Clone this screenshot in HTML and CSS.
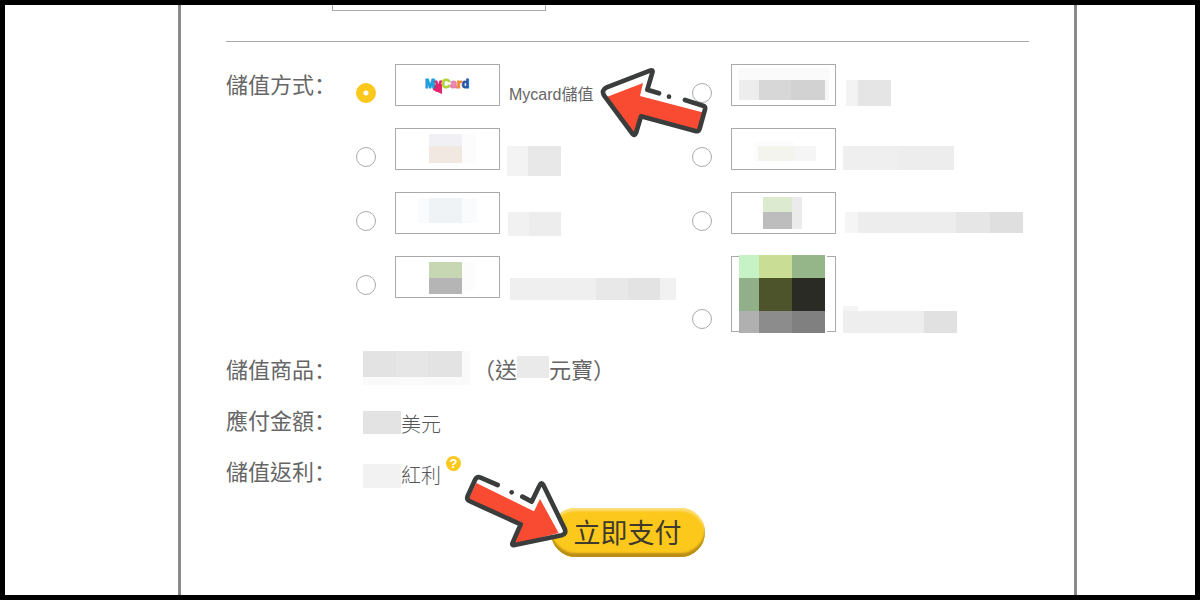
FILE: index.html
```
<!DOCTYPE html>
<html lang="zh-Hant">

<head>
    <meta charset="UTF-8">
    <meta name="viewport" content="width=device-width, initial-scale=1.0">
    <title>儲值</title>
    <link rel="stylesheet" href="styles.css">
</head>

<body>
    <form class="panel">
        <input class="account" type="text" aria-label="帳號">

        <div class="methods" role="radiogroup" aria-labelledby="method-label">
            <span class="row-label" id="method-label">儲值方式<span class="colon" lang="zh-Hans">：</span></span>
            <div class="options">
                <label class="option">
                    <input type="radio" name="method" checked>
                    <span class="brand">
                        <svg width="103" height="40" viewBox="0 0 103 40">
                            <path d="M36 20 L46 19 L46 29 L37 25 Z" fill="#e5266f" />
                            <text class="logo" x="29" y="23"><tspan class="logo-m">M</tspan><tspan class="logo-y">y</tspan><tspan class="logo-c">C</tspan><tspan class="logo-a">a</tspan><tspan class="logo-r">r</tspan><tspan class="logo-d">d</tspan></text>
                        </svg>
                    </span>
                    <span class="option-name">Mycard儲值</span>
                    <svg class="arrow arrow-left" width="110" height="72" viewBox="30 33 330 216">
                        <path d="M172 104 L188 48 L42 100 L38 118 L133 240 L153 184 L322 230 L347 155 Z" fill="#fff" />
                        <path d="M52 125 L159 84 L150 123 L342 173 L322 230 L153 182 L133 240 Z" fill="#f94b31" />
                        <path class="outline" d="M207 115 L172 104 L187 53 Q190 43 180 47 L50 97 Q33 105 42 121 L127 236 Q134 244 138 234 L153 184 L316 228 Q326 231 329 221 L345 163 Q347 155 339 152 L285 135" />
                        <circle cx="237" cy="125" r="7" fill="#3b3d3d" />
                    </svg>
                </label>
                <label class="option">
                    <input type="radio" name="method" aria-label="選項2">
                    <span class="brand">
                        <svg width="103" height="40">
                            <rect x="7" y="3" width="90" height="12" fill="#fafafa" />
                            <rect x="7" y="15" width="20" height="20" fill="#ededed" />
                            <rect x="27" y="15" width="32" height="20" fill="#d7d7d7" />
                            <rect x="59" y="15" width="34" height="20" fill="#d2d2d2" />
                            <rect x="93" y="15" width="4" height="20" fill="#f6f6f6" />
                        </svg>
                    </span>
                    <svg class="mask" width="180" height="28">
                        <rect x="1" y="2" width="12" height="26" fill="#f3f3f3" />
                        <rect x="13" y="2" width="33" height="26" fill="#e5e5e5" />
                    </svg>
                </label>
                <label class="option">
                    <input type="radio" name="method" aria-label="選項3">
                    <span class="brand">
                        <svg width="103" height="40">
                            <rect x="33" y="5" width="33" height="12" fill="#f1f0f5" />
                            <rect x="33" y="17" width="33" height="17" fill="#f2e8e2" />
                            <rect x="66" y="5" width="14" height="29" fill="#fcfcfc" />
                        </svg>
                    </span>
                    <svg class="mask" width="180" height="28">
                        <rect x="-2" y="4" width="21" height="30" fill="#f3f3f3" />
                        <rect x="19" y="4" width="33" height="30" fill="#e8e8e8" />
                    </svg>
                </label>
                <label class="option">
                    <input type="radio" name="method" aria-label="選項4">
                    <span class="brand">
                        <svg width="103" height="40">
                            <rect x="22" y="13" width="40" height="19" fill="#fcfcfc" />
                            <rect x="26" y="17" width="36" height="15" fill="#f3f4ee" />
                            <rect x="62" y="17" width="22" height="15" fill="#f5f5f5" />
                        </svg>
                    </span>
                    <svg class="mask" width="180" height="28">
                        <rect x="-2" y="4" width="56" height="24" fill="#efefef" />
                        <rect x="54" y="4" width="55" height="24" fill="#ededed" />
                    </svg>
                </label>
                <label class="option">
                    <input type="radio" name="method" aria-label="選項5">
                    <span class="brand">
                        <svg width="103" height="40">
                            <rect x="22" y="5" width="59" height="25" fill="#f9fbfc" />
                            <rect x="33" y="5" width="33" height="25" fill="#eff3f6" />
                        </svg>
                    </span>
                    <svg class="mask" width="180" height="28">
                        <rect x="-1" y="6" width="21" height="24" fill="#f1f1f1" />
                        <rect x="20" y="6" width="32" height="24" fill="#ededed" />
                    </svg>
                </label>
                <label class="option">
                    <input type="radio" name="method" aria-label="選項6">
                    <span class="brand">
                        <svg width="103" height="40">
                            <rect x="31" y="4" width="29" height="15" fill="#dceacf" />
                            <rect x="31" y="19" width="29" height="17" fill="#bdbdbd" />
                            <rect x="60" y="4" width="10" height="32" fill="#ebebeb" />
                        </svg>
                    </span>
                    <svg class="mask" width="180" height="28">
                        <rect x="0" y="6" width="13" height="21" fill="#f5f5f5" />
                        <rect x="13" y="6" width="98" height="21" fill="#ededed" />
                        <rect x="111" y="6" width="34" height="21" fill="#e6e6e6" />
                        <rect x="145" y="6" width="33" height="21" fill="#dfdfdf" />
                    </svg>
                </label>
                <label class="option">
                    <input type="radio" name="method" aria-label="選項7">
                    <span class="brand">
                        <svg width="103" height="40">
                            <rect x="33" y="5" width="33" height="16" fill="#c8d7b3" />
                            <rect x="33" y="21" width="33" height="16" fill="#b5b5b5" />
                            <rect x="66" y="5" width="12" height="28" fill="#fcfcfc" />
                        </svg>
                    </span>
                    <svg class="mask" width="180" height="28">
                        <rect x="1" y="8" width="86" height="22" fill="#efefef" />
                        <rect x="87" y="8" width="32" height="22" fill="#e8e8e8" />
                        <rect x="119" y="8" width="32" height="22" fill="#e3e3e3" />
                        <rect x="151" y="8" width="16" height="22" fill="#f1f1f1" />
                    </svg>
                </label>
                <label class="option">
                    <input type="radio" name="method" aria-label="選項8">
                    <span class="brand">
                        <svg width="103" height="74">
                            <rect x="7" y="-2" width="88" height="78" fill="#fff" />
                            <rect x="7" y="-2" width="20" height="23" fill="#c6f2c6" />
                            <rect x="27" y="-2" width="33" height="23" fill="#c9dd94" />
                            <rect x="60" y="-2" width="33" height="23" fill="#95b688" />
                            <rect x="7" y="21" width="20" height="33" fill="#91b08a" />
                            <rect x="27" y="21" width="33" height="33" fill="#4d532a" />
                            <rect x="60" y="21" width="33" height="33" fill="#2a2b25" />
                            <rect x="7" y="54" width="20" height="22" fill="#b0b0b0" />
                            <rect x="27" y="54" width="33" height="22" fill="#8c8c8c" />
                            <rect x="60" y="54" width="33" height="22" fill="#808080" />
                        </svg>
                    </span>
                    <svg class="mask" width="180" height="28">
                        <rect x="-2" y="2" width="15" height="26" fill="#f4f4f4" />
                        <rect x="-2" y="7" width="81" height="22" fill="#eee" />
                        <rect x="79" y="7" width="33" height="22" fill="#e1e1e1" />
                    </svg>
                </label>
            </div>
        </div>

        <div class="summary">
            <div class="row">
                <span class="row-label">儲值商品<span class="colon" lang="zh-Hans">：</span></span>
                <svg class="mask" width="110" height="26">
                    <rect x="0" y="-7" width="107" height="34" fill="#fafafa" />
                    <rect x="0" y="-7" width="99" height="26" fill="#e3e3e3" />
                    <rect x="33" y="-7" width="32" height="26" fill="#e6e6e6" />
                </svg>
                <span class="value">（送</span>
                <svg class="mask" width="32" height="26">
                    <rect x="0" y="-2" width="32" height="22" fill="#eaeaea" />
                </svg>
                <span class="value">元寶）</span>
            </div>
            <div class="row">
                <span class="row-label">應付金額<span class="colon" lang="zh-Hans">：</span></span>
                <svg class="mask" width="38" height="26">
                    <rect x="0" y="2" width="38" height="23" fill="#e3e3e3" />
                </svg>
                <span class="unit">美元</span>
            </div>
            <div class="row">
                <span class="row-label">儲值返利<span class="colon" lang="zh-Hans">：</span></span>
                <svg class="mask" width="38" height="26">
                    <rect x="0" y="4" width="38" height="24" fill="#f2f2f2" />
                </svg>
                <span class="unit">紅利</span>
                <button class="help" type="button">?</button>
            </div>
        </div>

        <div class="actions">
            <button class="pay" type="button">立即支付
                <svg class="arrow arrow-right" width="106" height="76" viewBox="39 72 318 228">
                    <path d="M143 108 L84 84 L52 150 L212 226 L188 287 L345 255 L275 105 L245 158 Z" fill="#fff" />
                    <path d="M79 102 L252 187 L270 150 L326 252 L188 287 L212 226 L54 152 Z" fill="#f94b31" />
                    <path class="outline" d="M143 108 L92 86 Q81 81 76 91 L53 141 Q49 151 58 156 L212 226 L188 281 Q184 290 194 288 L335 259 Q350 255 344 239 L280 108 Q274 98 269 109 L245 158 L217 143" />
                    <circle cx="185" cy="130" r="7" fill="#3b3d3d" />
                </svg>
            </button>
        </div>
    </form>
</body>

</html>
```
FILE: styles.css
```
* {
    box-sizing: border-box;
}

body {
    margin: 0;
    min-height: 100vh;
    display: flex;
    border: 5px solid #000;
    background: #fff;
    color: #666;
    font-family: "Liberation Sans", "Noto Sans CJK TC", sans-serif;
    font-size: 22px;
}

.panel {
    flex: 1;
    margin: 0 118px 0 173px;
    padding: 0 45px;
    border: solid #8a8a8a;
    border-width: 0 3px;
}

/* bottom edge of the account field */
.account {
    display: block;
    width: 214px;
    height: 6px;
    margin-left: 106px;
    padding: 0;
    border: 1px solid #aaa;
    border-top: 0;
}

.methods {
    display: flex;
    margin-top: 30px;
    padding: 22px 1px 0 0;
    border-top: 1px solid #aaa;
}

.row-label {
    flex: 0 0 130px;
    line-height: 44px;
}

.colon {
    font-family: "Noto Sans CJK SC", sans-serif;
    line-height: 1;
}

.options {
    flex: 1;
    display: grid;
    grid-template-columns: 1fr 1fr;
    align-items: start;
    row-gap: 22px;
}

.option {
    position: relative;
    display: flex;
    align-items: flex-end;
}

.option input {
    appearance: none;
    flex: none;
    width: 20px;
    height: 20px;
    margin: 0 19px 3px 0;
    border: 1px solid #aaa;
    border-radius: 50%;
    background: #fff;
}

.option input:checked {
    border-color: #fbc81b;
    background: radial-gradient(circle, #fff 2px, #fbc81b 3px);
}

.brand {
    flex: none;
    margin-right: 9px;
    border: 1px solid #aaa;
}

.brand svg {
    display: block;
    overflow: visible;
}

.logo {
    font: bold 12px "Liberation Sans", sans-serif;
    stroke-width: 1px;
}

.logo-m {
    fill: #1b9fdc;
    stroke: #1b9fdc;
}

.logo-y {
    fill: #e0246e;
    stroke: #e0246e;
}

.logo-c {
    fill: #b5d334;
    stroke: #b5d334;
}

.logo-a {
    fill: #e77fb0;
    stroke: #e77fb0;
}

.logo-r {
    fill: #f08a24;
    stroke: #f08a24;
}

.logo-d {
    fill: #2459a8;
    stroke: #2459a8;
}

.option-name {
    font-size: 16px;
    line-height: 22px;
}

.mask {
    flex: none;
    overflow: visible;
}

.arrow {
    position: absolute;
    z-index: 1;
}

.arrow .outline {
    fill: none;
    stroke: #3b3d3d;
    stroke-width: 14px;
    stroke-linecap: round;
    stroke-linejoin: round;
}

.arrow-left {
    left: 244px;
    top: 2px;
}

.arrow-right {
    left: -88px;
    top: -35px;
}

.summary {
    padding-top: 13px;
}

.row {
    display: flex;
    align-items: center;
    height: 51px;
}

.row .row-label {
    margin-right: 7px;
}

.value {
    line-height: 44px;
}

.unit {
    padding-top: 6px;
    color: #555;
    font-size: 20px;
    font-weight: 300;
    line-height: 44px;
}

.help {
    align-self: flex-start;
    width: 15px;
    height: 15px;
    margin: 9px 0 0 5px;
    padding: 0;
    border: 0;
    border-radius: 50%;
    background: #fbc81b;
    color: #fff;
    font: bold 13px/15px "Liberation Sans", sans-serif;
}

.actions {
    margin-top: 10px;
    text-align: center;
}

.pay {
    position: relative;
    width: 154px;
    height: 49px;
    padding: 0 0 2px;
    border: 0;
    border-radius: 25px;
    background: #fbc81b;
    box-shadow: inset 0 -4px 2px #b98e17, inset 0 3px 2px #fddd75;
    color: #3f3a2c;
    font: 27px "Noto Sans CJK TC", sans-serif;
}
```
